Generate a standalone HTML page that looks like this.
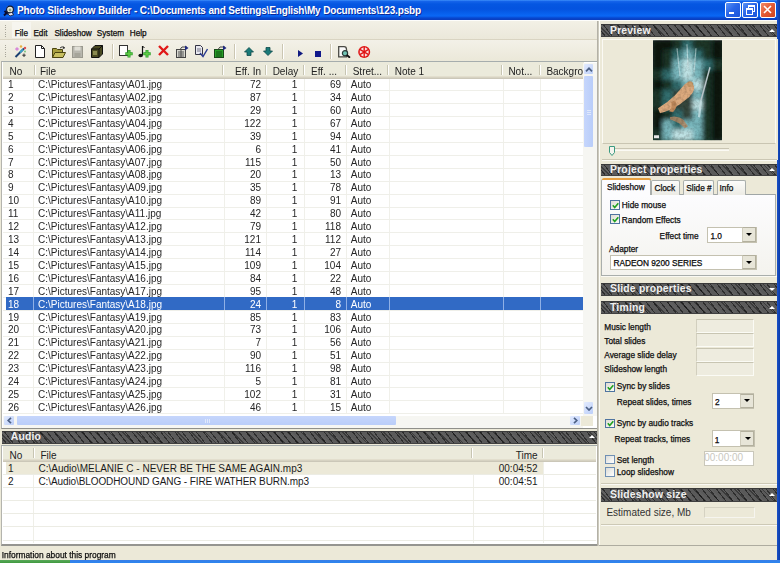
<!DOCTYPE html>
<html><head><meta charset="utf-8"><style>
html,body{margin:0;padding:0;}
body{width:780px;height:563px;overflow:hidden;position:relative;background:#ece9d8;font-family:"Liberation Sans", sans-serif;}
#w{position:absolute;left:0;top:0;width:780px;height:563px;overflow:hidden;filter:blur(0.35px);}
#w>div,#w>svg{position:absolute;}
.t{white-space:pre;}
.u{-webkit-text-stroke:0.25px #000;}
</style></head><body><div id="w">
<div style="left:0px;top:0px;width:780px;height:20px;background:linear-gradient(to bottom,#3d8ffa 0px,#1463ea 1.5px,#0557e2 4px,#0453df 9px,#0862ef 14px,#0a67f5 16px,#0747cf 18px,#0b3cbd 20px);"></div>
<div style="left:1.5px;top:2.5px;width:14px;height:14px;"><svg width="14" height="14" viewBox="0 0 14 14"><path d="M2 12.5 L6 8.5 M2.5 8 L6 11" stroke="#0a0a30" stroke-width="2"/><circle cx="8" cy="6.5" r="3.4" fill="#e6e6dc" stroke="#101830" stroke-width="1.1"/><circle cx="8" cy="7" r="1.4" fill="#8aa880"/><path d="M5.5 10.5 L9.5 9.5 L12 11.5 L8 13 Z" fill="#e8e4f0" stroke="#101830" stroke-width="0.8"/></svg></div>
<div class="t" style="left:17.00px;top:6.44px;font-size:10px;line-height:10px;color:#fff;font-weight:bold;letter-spacing:-0.15px;text-shadow:1px 1px 0 #0b2a9a;">Photo Slideshow Builder - C:\Documents and Settings\English\My Documents\123.psbp</div>
<div style="left:724.8px;top:1.6px;width:14px;height:14px;border:1px solid #fff;border-radius:2px;background:linear-gradient(135deg,#5a92f5 0%,#2a66e8 45%,#1c55da 100%);"></div>
<div style="left:742.4px;top:1.6px;width:14px;height:14px;border:1px solid #fff;border-radius:2px;background:linear-gradient(135deg,#5a92f5 0%,#2a66e8 45%,#1c55da 100%);"></div>
<div style="left:729px;top:11.5px;width:5px;height:2px;background:#fff;"></div>
<div style="left:748px;top:5px;width:5px;height:4px;border:1px solid #fff;border-top-width:2px;"></div>
<div style="left:746px;top:8px;width:5px;height:4px;border:1px solid #fff;border-top-width:2px;background:#2a66e8;"></div>
<div style="left:759.7px;top:1.6px;width:14px;height:14px;border:1px solid #fff;border-radius:2px;background:linear-gradient(135deg,#f08a68 0%,#e25a35 50%,#cf4420 100%);"></div>
<svg style="position:absolute;left:763px;top:5px" width="9" height="9" viewBox="0 0 9 9"><path d="M1 1 L8 8 M8 1 L1 8" stroke="#fff" stroke-width="1.6"/></svg>
<div style="left:776.7px;top:0px;width:3.3px;height:563px;background:linear-gradient(to right,#1a50c8,#0a3ca8);"></div>
<div style="left:775.6px;top:21px;width:1.1px;height:538px;background:#f8f8f2;"></div>
<div style="left:0px;top:20px;width:776.5px;height:1px;background:#fdfdfb;"></div>
<div style="left:0px;top:21px;width:597px;height:18px;background:linear-gradient(to bottom,#f2f0e6,#ebe8da);"></div>
<div style="left:0px;top:39px;width:597px;height:1px;background:#d9d4c2;"></div>
<div style="left:11.5px;top:22px;width:19px;height:16px;background:#f6f5ef;"></div>
<div style="left:5px;top:25.0px;width:1px;height:1px;background:#a8a69a;"></div>
<div style="left:5px;top:27.2px;width:1px;height:1px;background:#a8a69a;"></div>
<div style="left:5px;top:29.4px;width:1px;height:1px;background:#a8a69a;"></div>
<div style="left:5px;top:31.6px;width:1px;height:1px;background:#a8a69a;"></div>
<div style="left:5px;top:33.8px;width:1px;height:1px;background:#a8a69a;"></div>
<div style="left:5px;top:36.0px;width:1px;height:1px;background:#a8a69a;"></div>
<div class="t u" style="left:14.80px;top:29.66px;font-size:8.2px;line-height:8.2px;color:#1a1a1a;font-weight:normal;">File</div>
<div class="t u" style="left:33.40px;top:29.66px;font-size:8.2px;line-height:8.2px;color:#1a1a1a;font-weight:normal;">Edit</div>
<div class="t u" style="left:54.40px;top:29.66px;font-size:8.2px;line-height:8.2px;color:#1a1a1a;font-weight:normal;">Slideshow</div>
<div class="t u" style="left:96.80px;top:29.66px;font-size:8.2px;line-height:8.2px;color:#1a1a1a;font-weight:normal;">System</div>
<div class="t u" style="left:129.80px;top:29.66px;font-size:8.2px;line-height:8.2px;color:#1a1a1a;font-weight:normal;">Help</div>
<div style="left:0px;top:40px;width:597px;height:21px;background:linear-gradient(to bottom,#f3f1e8,#ebe8d9);"></div>
<div style="left:5px;top:45.0px;width:1px;height:1px;background:#a8a69a;"></div>
<div style="left:5px;top:47.2px;width:1px;height:1px;background:#a8a69a;"></div>
<div style="left:5px;top:49.4px;width:1px;height:1px;background:#a8a69a;"></div>
<div style="left:5px;top:51.6px;width:1px;height:1px;background:#a8a69a;"></div>
<div style="left:5px;top:53.8px;width:1px;height:1px;background:#a8a69a;"></div>
<div style="left:5px;top:56.0px;width:1px;height:1px;background:#a8a69a;"></div>
<div style="left:111.8px;top:44px;width:1px;height:15px;background:#cbc6b2;"></div>
<div style="left:112.8px;top:44px;width:1px;height:15px;background:#fff;"></div>
<div style="left:234px;top:44px;width:1px;height:15px;background:#cbc6b2;"></div>
<div style="left:235px;top:44px;width:1px;height:15px;background:#fff;"></div>
<div style="left:282.3px;top:44px;width:1px;height:15px;background:#cbc6b2;"></div>
<div style="left:283.3px;top:44px;width:1px;height:15px;background:#fff;"></div>
<div style="left:330.4px;top:44px;width:1px;height:15px;background:#cbc6b2;"></div>
<div style="left:331.4px;top:44px;width:1px;height:15px;background:#fff;"></div>
<svg style="position:absolute;left:14px;top:45px" width="13" height="13" viewBox="0 0 13 13"><path d="M1.5 12 L10 3.5" stroke="#1a3f70" stroke-width="2"/><path d="M6 7.5 L9 4.5" stroke="#39a0c8" stroke-width="2"/><rect x="1.5" y="2.5" width="3" height="3" fill="#d88ad8" transform="rotate(45 3 4)"/><circle cx="7" cy="1.5" r="1.2" fill="#e8b040"/><circle cx="11" cy="3" r="1.2" fill="#e05050"/><path d="M10 8.5 L10 12 M8.3 10.2 L11.7 10.2" stroke="#333" stroke-width="1"/><circle cx="11" cy="6.5" r="0.9" fill="#70c070"/></svg>
<svg style="position:absolute;left:35px;top:45px" width="10" height="13" viewBox="0 0 10 13"><path d="M0.5 0.5 H6.5 L9.5 3.5 V12.5 H0.5 Z" fill="#fff" stroke="#222" stroke-width="1"/><path d="M6.5 0.5 V3.5 H9.5" fill="none" stroke="#222" stroke-width="1"/></svg>
<svg style="position:absolute;left:52px;top:46px" width="14" height="12" viewBox="0 0 14 12"><path d="M0.5 2.5 H4.5 L5.5 3.5 H10.5 V11.5 H0.5 Z" fill="#a8a040" stroke="#4a4410" stroke-width="1"/><path d="M0.5 11.5 L3 6.5 H13.5 L11 11.5 Z" fill="#c8c060" stroke="#4a4410" stroke-width="1"/><path d="M8 2 Q10 -0.5 12.5 2 M12.5 2 L11.5 0.5 M12.5 2 L10.8 2.5" stroke="#333" fill="none" stroke-width="1"/></svg>
<svg style="position:absolute;left:72px;top:46px" width="11" height="12" viewBox="0 0 11 12"><rect x="0.5" y="0.5" width="10" height="11" fill="#b8b7ae" stroke="#9a998e"/><rect x="2.5" y="0.5" width="6" height="4" fill="#e0dfd6"/><rect x="2.5" y="7" width="6" height="4.5" fill="#a6a59a"/></svg>
<svg style="position:absolute;left:91px;top:45px" width="12" height="13" viewBox="0 0 12 13"><path d="M0.5 4 L4 0.5 H11.5 V9 L8 12.5 H0.5 Z" fill="#4a4a22" stroke="#111" stroke-width="1"/><path d="M0.5 4 H8 V12.5 M8 4 L11.5 0.5" stroke="#111" fill="none"/><rect x="2" y="6" width="4" height="4" fill="#8a8a50"/></svg>
<svg style="position:absolute;left:118.5px;top:44.5px" width="14" height="13" viewBox="0 0 14 13"><rect x="0.5" y="0.5" width="8" height="10" fill="#fff" stroke="#333"/><path d="M10 5 V12.5 M6.3 8.8 H13.7" stroke="#2aa02a" stroke-width="3"/><path d="M10 5.5 V12 M6.8 8.8 H13.2" stroke="#6ad04a" stroke-width="1.2"/></svg>
<svg style="position:absolute;left:138px;top:44.5px" width="13" height="13" viewBox="0 0 13 13"><path d="M4.5 1 V10" stroke="#111" stroke-width="1.2"/><path d="M4.5 1 L6.5 3" stroke="#111" stroke-width="1"/><ellipse cx="2.7" cy="10.5" rx="2.3" ry="1.8" fill="#111"/><path d="M9 5 V12.5 M5.3 8.8 H12.7" stroke="#2aa02a" stroke-width="3"/><path d="M9 5.5 V12 M5.8 8.8 H12.2" stroke="#6ad04a" stroke-width="1.2"/></svg>
<svg style="position:absolute;left:158px;top:45px" width="11" height="11" viewBox="0 0 11 11"><path d="M1 1 L10 10 M10 1 L1 10" stroke="#e01818" stroke-width="2.4"/></svg>
<svg style="position:absolute;left:175.5px;top:44.5px" width="13" height="13" viewBox="0 0 13 13"><rect x="0.5" y="4.5" width="9" height="8" fill="#d8d8d0" stroke="#444"/><path d="M2 7 H8 M2 9 H8 M2 11 H8 M5 5 V12" stroke="#555"/><path d="M4 4.5 L6 2 H11" stroke="#444" fill="none"/><path d="M9 0.5 L12.5 3 L9 5.5 Z" fill="#202a80"/></svg>
<svg style="position:absolute;left:195px;top:44.5px" width="13" height="13" viewBox="0 0 13 13"><path d="M0.5 0.5 H5.5 L7.5 2.5 V9.5 H0.5 Z" fill="#e8e8f0" stroke="#334" stroke-width="1"/><path d="M2 4 H6 M2 6 H6" stroke="#778"/><path d="M5 8 L8 11.5 L12.5 4" stroke="#2a3a90" stroke-width="1.4" fill="none"/></svg>
<svg style="position:absolute;left:213.5px;top:44.5px" width="13" height="13" viewBox="0 0 13 13"><rect x="0.5" y="4.5" width="9" height="8" fill="#28a028" stroke="#184818"/><path d="M2 7 H8 M2 9 H8 M2 11 H8" stroke="#105010"/><path d="M4 4.5 L6 2 H11" stroke="#444" fill="none"/><path d="M9 0.5 L12.5 3 L9 5.5 Z" fill="#202a80"/></svg>
<svg style="position:absolute;left:243.5px;top:47px" width="10" height="9" viewBox="0 0 10 9"><path d="M5 0.5 L9.5 5 H7 V8.5 H3 V5 H0.5 Z" fill="#1a7a78" stroke="#0e4a4a" stroke-width="0.8"/></svg>
<svg style="position:absolute;left:262.5px;top:47px" width="10" height="9" viewBox="0 0 10 9"><path d="M5 8.5 L9.5 4 H7 V0.5 H3 V4 H0.5 Z" fill="#1a7a78" stroke="#0e4a4a" stroke-width="0.8"/></svg>
<svg style="position:absolute;left:297.5px;top:50px" width="5" height="7" viewBox="0 0 5 7"><path d="M0 0 L5 3.5 L0 7 Z" fill="#101a80"/></svg>
<div style="left:314.6px;top:50.7px;width:6.7px;height:6.5px;background:#10188a;"></div>
<svg style="position:absolute;left:338px;top:45.5px" width="13" height="12" viewBox="0 0 13 12"><path d="M0.7 0.7 H6 Q8.5 0.7 8.5 3.5 V10.8 H0.7 Z" fill="#fafafa" stroke="#4a4a44" stroke-width="1.3"/><circle cx="7" cy="7.2" r="2.6" fill="#70c4b4" stroke="#2a3a38" stroke-width="1.2"/><path d="M8.8 9 L12 11.8" stroke="#111" stroke-width="1.8"/></svg>
<svg style="position:absolute;left:357.5px;top:45.8px" width="13" height="12" viewBox="0 0 13 12"><circle cx="6.2" cy="6" r="6" fill="#e01414"/><path d="M6.85 4.87 L6.94 1.36 L9.85 3.04 Z M7.50 6.00 L10.59 4.32 L10.59 7.68 Z M6.85 7.13 L9.85 8.96 L6.94 10.64 Z M5.55 7.13 L5.46 10.64 L2.55 8.96 Z M4.90 6.00 L1.81 7.68 L1.81 4.32 Z M5.55 4.87 L2.55 3.04 L5.46 1.36 Z" fill="#fbe0e0"/></svg>
<div style="left:1.4px;top:61px;width:597.4px;height:368.3px;background:#fff;box-sizing:border-box;border-left:1.1px solid #b4b4ae;border-top:1.6px solid #a6adad;border-right:2.5px solid #a3a39c;border-bottom:1.4px solid #8f8f8a;"></div>
<div style="left:2.5px;top:62.6px;width:594px;height:1px;background:#fbfbf8;"></div>
<div style="left:2.5px;top:62px;width:581px;height:16px;background:#ebeadb;"></div>
<div style="left:2.5px;top:75.5px;width:581px;height:1px;background:#e2decd;"></div>
<div style="left:2.5px;top:76.5px;width:581px;height:1px;background:#d6d2c2;"></div>
<div style="left:2.5px;top:77.5px;width:581px;height:1px;background:#cbc7b8;"></div>
<div style="left:34px;top:65px;width:1px;height:10px;background:#c7c5b2;"></div>
<div style="left:35px;top:65px;width:1px;height:10px;background:#fff;"></div>
<div style="left:222px;top:65px;width:1px;height:10px;background:#c7c5b2;"></div>
<div style="left:223px;top:65px;width:1px;height:10px;background:#fff;"></div>
<div style="left:264.8px;top:65px;width:1px;height:10px;background:#c7c5b2;"></div>
<div style="left:265.8px;top:65px;width:1px;height:10px;background:#fff;"></div>
<div style="left:302.6px;top:65px;width:1px;height:10px;background:#c7c5b2;"></div>
<div style="left:303.6px;top:65px;width:1px;height:10px;background:#fff;"></div>
<div style="left:345px;top:65px;width:1px;height:10px;background:#c7c5b2;"></div>
<div style="left:346px;top:65px;width:1px;height:10px;background:#fff;"></div>
<div style="left:387px;top:65px;width:1px;height:10px;background:#c7c5b2;"></div>
<div style="left:388px;top:65px;width:1px;height:10px;background:#fff;"></div>
<div style="left:501.3px;top:65px;width:1px;height:10px;background:#c7c5b2;"></div>
<div style="left:502.3px;top:65px;width:1px;height:10px;background:#fff;"></div>
<div style="left:538.8px;top:65px;width:1px;height:10px;background:#c7c5b2;"></div>
<div style="left:539.8px;top:65px;width:1px;height:10px;background:#fff;"></div>
<div class="t" style="left:9.60px;top:66.53px;font-size:10px;line-height:10px;color:#222;font-weight:normal;">No</div>
<div class="t" style="left:40.00px;top:66.53px;font-size:10px;line-height:10px;color:#222;font-weight:normal;">File</div>
<div class="t" style="left:-39.00px;width:300px;text-align:right;top:66.53px;font-size:10px;line-height:10px;color:#222;font-weight:normal;">Eff. In</div>
<div class="t" style="left:-1.80px;width:300px;text-align:right;top:66.53px;font-size:10px;line-height:10px;color:#222;font-weight:normal;">Delay</div>
<div class="t" style="left:37.00px;width:300px;text-align:right;top:66.53px;font-size:10px;line-height:10px;color:#222;font-weight:normal;">Eff. ...</div>
<div class="t" style="left:352.70px;top:66.53px;font-size:10px;line-height:10px;color:#222;font-weight:normal;">Stret...</div>
<div class="t" style="left:394.70px;top:66.53px;font-size:10px;line-height:10px;color:#222;font-weight:normal;">Note 1</div>
<div class="t" style="left:508.40px;top:66.53px;font-size:10px;line-height:10px;color:#222;font-weight:normal;">Not...</div>
<div class="t" style="left:546.40px;top:66.53px;font-size:10px;line-height:10px;color:#222;font-weight:normal;">Backgro</div>
<div style="left:33px;top:78.5px;width:1px;height:335.5px;background:#f0f0ea;"></div>
<div style="left:223.5px;top:78.5px;width:1px;height:335.5px;background:#f0f0ea;"></div>
<div style="left:266px;top:78.5px;width:1px;height:335.5px;background:#f0f0ea;"></div>
<div style="left:304px;top:78.5px;width:1px;height:335.5px;background:#f0f0ea;"></div>
<div style="left:346px;top:78.5px;width:1px;height:335.5px;background:#f0f0ea;"></div>
<div style="left:388.5px;top:78.5px;width:1px;height:335.5px;background:#f0f0ea;"></div>
<div style="left:502.7px;top:78.5px;width:1px;height:335.5px;background:#f0f0ea;"></div>
<div style="left:540px;top:78.5px;width:1px;height:335.5px;background:#f0f0ea;"></div>
<div style="left:2.5px;top:90.25999999999999px;width:581px;height:0.8px;background:#efefe9;"></div>
<div style="left:2.5px;top:103.17999999999999px;width:581px;height:0.8px;background:#efefe9;"></div>
<div style="left:2.5px;top:116.1px;width:581px;height:0.8px;background:#efefe9;"></div>
<div style="left:2.5px;top:129.01999999999998px;width:581px;height:0.8px;background:#efefe9;"></div>
<div style="left:2.5px;top:141.94px;width:581px;height:0.8px;background:#efefe9;"></div>
<div style="left:2.5px;top:154.85999999999999px;width:581px;height:0.8px;background:#efefe9;"></div>
<div style="left:2.5px;top:167.78px;width:581px;height:0.8px;background:#efefe9;"></div>
<div style="left:2.5px;top:180.7px;width:581px;height:0.8px;background:#efefe9;"></div>
<div style="left:2.5px;top:193.61999999999998px;width:581px;height:0.8px;background:#efefe9;"></div>
<div style="left:2.5px;top:206.54px;width:581px;height:0.8px;background:#efefe9;"></div>
<div style="left:2.5px;top:219.45999999999998px;width:581px;height:0.8px;background:#efefe9;"></div>
<div style="left:2.5px;top:232.38px;width:581px;height:0.8px;background:#efefe9;"></div>
<div style="left:2.5px;top:245.29999999999998px;width:581px;height:0.8px;background:#efefe9;"></div>
<div style="left:2.5px;top:258.22px;width:581px;height:0.8px;background:#efefe9;"></div>
<div style="left:2.5px;top:271.14px;width:581px;height:0.8px;background:#efefe9;"></div>
<div style="left:2.5px;top:284.06000000000006px;width:581px;height:0.8px;background:#efefe9;"></div>
<div style="left:2.5px;top:296.98px;width:581px;height:0.8px;background:#efefe9;"></div>
<div style="left:2.5px;top:309.9px;width:581px;height:0.8px;background:#efefe9;"></div>
<div style="left:2.5px;top:322.82000000000005px;width:581px;height:0.8px;background:#efefe9;"></div>
<div style="left:2.5px;top:335.74px;width:581px;height:0.8px;background:#efefe9;"></div>
<div style="left:2.5px;top:348.65999999999997px;width:581px;height:0.8px;background:#efefe9;"></div>
<div style="left:2.5px;top:361.58000000000004px;width:581px;height:0.8px;background:#efefe9;"></div>
<div style="left:2.5px;top:374.5px;width:581px;height:0.8px;background:#efefe9;"></div>
<div style="left:2.5px;top:387.4200000000001px;width:581px;height:0.8px;background:#efefe9;"></div>
<div style="left:2.5px;top:400.34000000000003px;width:581px;height:0.8px;background:#efefe9;"></div>
<div style="left:2.5px;top:413.26px;width:581px;height:0.8px;background:#efefe9;"></div>
<div class="t" style="left:8.00px;top:79.98px;font-size:10px;line-height:10px;color:#262626;font-weight:normal;">1</div>
<div class="t" style="left:38.10px;top:79.98px;font-size:10px;line-height:10px;color:#262626;font-weight:normal;">C:\Pictures\Fantasy\A01.jpg</div>
<div class="t" style="left:-39.00px;width:300px;text-align:right;top:79.98px;font-size:10px;line-height:10px;color:#262626;font-weight:normal;">72</div>
<div class="t" style="left:-2.60px;width:300px;text-align:right;top:79.98px;font-size:10px;line-height:10px;color:#262626;font-weight:normal;">1</div>
<div class="t" style="left:41.00px;width:300px;text-align:right;top:79.98px;font-size:10px;line-height:10px;color:#262626;font-weight:normal;">69</div>
<div class="t" style="left:350.80px;top:79.98px;font-size:10px;line-height:10px;color:#262626;font-weight:normal;">Auto</div>
<div class="t" style="left:8.00px;top:92.91px;font-size:10px;line-height:10px;color:#262626;font-weight:normal;">2</div>
<div class="t" style="left:38.10px;top:92.91px;font-size:10px;line-height:10px;color:#262626;font-weight:normal;">C:\Pictures\Fantasy\A02.jpg</div>
<div class="t" style="left:-39.00px;width:300px;text-align:right;top:92.91px;font-size:10px;line-height:10px;color:#262626;font-weight:normal;">87</div>
<div class="t" style="left:-2.60px;width:300px;text-align:right;top:92.91px;font-size:10px;line-height:10px;color:#262626;font-weight:normal;">1</div>
<div class="t" style="left:41.00px;width:300px;text-align:right;top:92.91px;font-size:10px;line-height:10px;color:#262626;font-weight:normal;">34</div>
<div class="t" style="left:350.80px;top:92.91px;font-size:10px;line-height:10px;color:#262626;font-weight:normal;">Auto</div>
<div class="t" style="left:8.00px;top:105.83px;font-size:10px;line-height:10px;color:#262626;font-weight:normal;">3</div>
<div class="t" style="left:38.10px;top:105.83px;font-size:10px;line-height:10px;color:#262626;font-weight:normal;">C:\Pictures\Fantasy\A03.jpg</div>
<div class="t" style="left:-39.00px;width:300px;text-align:right;top:105.83px;font-size:10px;line-height:10px;color:#262626;font-weight:normal;">29</div>
<div class="t" style="left:-2.60px;width:300px;text-align:right;top:105.83px;font-size:10px;line-height:10px;color:#262626;font-weight:normal;">1</div>
<div class="t" style="left:41.00px;width:300px;text-align:right;top:105.83px;font-size:10px;line-height:10px;color:#262626;font-weight:normal;">60</div>
<div class="t" style="left:350.80px;top:105.83px;font-size:10px;line-height:10px;color:#262626;font-weight:normal;">Auto</div>
<div class="t" style="left:8.00px;top:118.75px;font-size:10px;line-height:10px;color:#262626;font-weight:normal;">4</div>
<div class="t" style="left:38.10px;top:118.75px;font-size:10px;line-height:10px;color:#262626;font-weight:normal;">C:\Pictures\Fantasy\A04.jpg</div>
<div class="t" style="left:-39.00px;width:300px;text-align:right;top:118.75px;font-size:10px;line-height:10px;color:#262626;font-weight:normal;">122</div>
<div class="t" style="left:-2.60px;width:300px;text-align:right;top:118.75px;font-size:10px;line-height:10px;color:#262626;font-weight:normal;">1</div>
<div class="t" style="left:41.00px;width:300px;text-align:right;top:118.75px;font-size:10px;line-height:10px;color:#262626;font-weight:normal;">67</div>
<div class="t" style="left:350.80px;top:118.75px;font-size:10px;line-height:10px;color:#262626;font-weight:normal;">Auto</div>
<div class="t" style="left:8.00px;top:131.66px;font-size:10px;line-height:10px;color:#262626;font-weight:normal;">5</div>
<div class="t" style="left:38.10px;top:131.66px;font-size:10px;line-height:10px;color:#262626;font-weight:normal;">C:\Pictures\Fantasy\A05.jpg</div>
<div class="t" style="left:-39.00px;width:300px;text-align:right;top:131.66px;font-size:10px;line-height:10px;color:#262626;font-weight:normal;">39</div>
<div class="t" style="left:-2.60px;width:300px;text-align:right;top:131.66px;font-size:10px;line-height:10px;color:#262626;font-weight:normal;">1</div>
<div class="t" style="left:41.00px;width:300px;text-align:right;top:131.66px;font-size:10px;line-height:10px;color:#262626;font-weight:normal;">94</div>
<div class="t" style="left:350.80px;top:131.66px;font-size:10px;line-height:10px;color:#262626;font-weight:normal;">Auto</div>
<div class="t" style="left:8.00px;top:144.59px;font-size:10px;line-height:10px;color:#262626;font-weight:normal;">6</div>
<div class="t" style="left:38.10px;top:144.59px;font-size:10px;line-height:10px;color:#262626;font-weight:normal;">C:\Pictures\Fantasy\A06.jpg</div>
<div class="t" style="left:-39.00px;width:300px;text-align:right;top:144.59px;font-size:10px;line-height:10px;color:#262626;font-weight:normal;">6</div>
<div class="t" style="left:-2.60px;width:300px;text-align:right;top:144.59px;font-size:10px;line-height:10px;color:#262626;font-weight:normal;">1</div>
<div class="t" style="left:41.00px;width:300px;text-align:right;top:144.59px;font-size:10px;line-height:10px;color:#262626;font-weight:normal;">41</div>
<div class="t" style="left:350.80px;top:144.59px;font-size:10px;line-height:10px;color:#262626;font-weight:normal;">Auto</div>
<div class="t" style="left:8.00px;top:157.50px;font-size:10px;line-height:10px;color:#262626;font-weight:normal;">7</div>
<div class="t" style="left:38.10px;top:157.50px;font-size:10px;line-height:10px;color:#262626;font-weight:normal;">C:\Pictures\Fantasy\A07.jpg</div>
<div class="t" style="left:-39.00px;width:300px;text-align:right;top:157.50px;font-size:10px;line-height:10px;color:#262626;font-weight:normal;">115</div>
<div class="t" style="left:-2.60px;width:300px;text-align:right;top:157.50px;font-size:10px;line-height:10px;color:#262626;font-weight:normal;">1</div>
<div class="t" style="left:41.00px;width:300px;text-align:right;top:157.50px;font-size:10px;line-height:10px;color:#262626;font-weight:normal;">50</div>
<div class="t" style="left:350.80px;top:157.50px;font-size:10px;line-height:10px;color:#262626;font-weight:normal;">Auto</div>
<div class="t" style="left:8.00px;top:170.42px;font-size:10px;line-height:10px;color:#262626;font-weight:normal;">8</div>
<div class="t" style="left:38.10px;top:170.42px;font-size:10px;line-height:10px;color:#262626;font-weight:normal;">C:\Pictures\Fantasy\A08.jpg</div>
<div class="t" style="left:-39.00px;width:300px;text-align:right;top:170.42px;font-size:10px;line-height:10px;color:#262626;font-weight:normal;">20</div>
<div class="t" style="left:-2.60px;width:300px;text-align:right;top:170.42px;font-size:10px;line-height:10px;color:#262626;font-weight:normal;">1</div>
<div class="t" style="left:41.00px;width:300px;text-align:right;top:170.42px;font-size:10px;line-height:10px;color:#262626;font-weight:normal;">13</div>
<div class="t" style="left:350.80px;top:170.42px;font-size:10px;line-height:10px;color:#262626;font-weight:normal;">Auto</div>
<div class="t" style="left:8.00px;top:183.34px;font-size:10px;line-height:10px;color:#262626;font-weight:normal;">9</div>
<div class="t" style="left:38.10px;top:183.34px;font-size:10px;line-height:10px;color:#262626;font-weight:normal;">C:\Pictures\Fantasy\A09.jpg</div>
<div class="t" style="left:-39.00px;width:300px;text-align:right;top:183.34px;font-size:10px;line-height:10px;color:#262626;font-weight:normal;">35</div>
<div class="t" style="left:-2.60px;width:300px;text-align:right;top:183.34px;font-size:10px;line-height:10px;color:#262626;font-weight:normal;">1</div>
<div class="t" style="left:41.00px;width:300px;text-align:right;top:183.34px;font-size:10px;line-height:10px;color:#262626;font-weight:normal;">78</div>
<div class="t" style="left:350.80px;top:183.34px;font-size:10px;line-height:10px;color:#262626;font-weight:normal;">Auto</div>
<div class="t" style="left:8.00px;top:196.27px;font-size:10px;line-height:10px;color:#262626;font-weight:normal;">10</div>
<div class="t" style="left:38.10px;top:196.27px;font-size:10px;line-height:10px;color:#262626;font-weight:normal;">C:\Pictures\Fantasy\A10.jpg</div>
<div class="t" style="left:-39.00px;width:300px;text-align:right;top:196.27px;font-size:10px;line-height:10px;color:#262626;font-weight:normal;">89</div>
<div class="t" style="left:-2.60px;width:300px;text-align:right;top:196.27px;font-size:10px;line-height:10px;color:#262626;font-weight:normal;">1</div>
<div class="t" style="left:41.00px;width:300px;text-align:right;top:196.27px;font-size:10px;line-height:10px;color:#262626;font-weight:normal;">91</div>
<div class="t" style="left:350.80px;top:196.27px;font-size:10px;line-height:10px;color:#262626;font-weight:normal;">Auto</div>
<div class="t" style="left:8.00px;top:209.18px;font-size:10px;line-height:10px;color:#262626;font-weight:normal;">11</div>
<div class="t" style="left:38.10px;top:209.18px;font-size:10px;line-height:10px;color:#262626;font-weight:normal;">C:\Pictures\Fantasy\A11.jpg</div>
<div class="t" style="left:-39.00px;width:300px;text-align:right;top:209.18px;font-size:10px;line-height:10px;color:#262626;font-weight:normal;">42</div>
<div class="t" style="left:-2.60px;width:300px;text-align:right;top:209.18px;font-size:10px;line-height:10px;color:#262626;font-weight:normal;">1</div>
<div class="t" style="left:41.00px;width:300px;text-align:right;top:209.18px;font-size:10px;line-height:10px;color:#262626;font-weight:normal;">80</div>
<div class="t" style="left:350.80px;top:209.18px;font-size:10px;line-height:10px;color:#262626;font-weight:normal;">Auto</div>
<div class="t" style="left:8.00px;top:222.10px;font-size:10px;line-height:10px;color:#262626;font-weight:normal;">12</div>
<div class="t" style="left:38.10px;top:222.10px;font-size:10px;line-height:10px;color:#262626;font-weight:normal;">C:\Pictures\Fantasy\A12.jpg</div>
<div class="t" style="left:-39.00px;width:300px;text-align:right;top:222.10px;font-size:10px;line-height:10px;color:#262626;font-weight:normal;">79</div>
<div class="t" style="left:-2.60px;width:300px;text-align:right;top:222.10px;font-size:10px;line-height:10px;color:#262626;font-weight:normal;">1</div>
<div class="t" style="left:41.00px;width:300px;text-align:right;top:222.10px;font-size:10px;line-height:10px;color:#262626;font-weight:normal;">118</div>
<div class="t" style="left:350.80px;top:222.10px;font-size:10px;line-height:10px;color:#262626;font-weight:normal;">Auto</div>
<div class="t" style="left:8.00px;top:235.03px;font-size:10px;line-height:10px;color:#262626;font-weight:normal;">13</div>
<div class="t" style="left:38.10px;top:235.03px;font-size:10px;line-height:10px;color:#262626;font-weight:normal;">C:\Pictures\Fantasy\A13.jpg</div>
<div class="t" style="left:-39.00px;width:300px;text-align:right;top:235.03px;font-size:10px;line-height:10px;color:#262626;font-weight:normal;">121</div>
<div class="t" style="left:-2.60px;width:300px;text-align:right;top:235.03px;font-size:10px;line-height:10px;color:#262626;font-weight:normal;">1</div>
<div class="t" style="left:41.00px;width:300px;text-align:right;top:235.03px;font-size:10px;line-height:10px;color:#262626;font-weight:normal;">112</div>
<div class="t" style="left:350.80px;top:235.03px;font-size:10px;line-height:10px;color:#262626;font-weight:normal;">Auto</div>
<div class="t" style="left:8.00px;top:247.95px;font-size:10px;line-height:10px;color:#262626;font-weight:normal;">14</div>
<div class="t" style="left:38.10px;top:247.95px;font-size:10px;line-height:10px;color:#262626;font-weight:normal;">C:\Pictures\Fantasy\A14.jpg</div>
<div class="t" style="left:-39.00px;width:300px;text-align:right;top:247.95px;font-size:10px;line-height:10px;color:#262626;font-weight:normal;">114</div>
<div class="t" style="left:-2.60px;width:300px;text-align:right;top:247.95px;font-size:10px;line-height:10px;color:#262626;font-weight:normal;">1</div>
<div class="t" style="left:41.00px;width:300px;text-align:right;top:247.95px;font-size:10px;line-height:10px;color:#262626;font-weight:normal;">27</div>
<div class="t" style="left:350.80px;top:247.95px;font-size:10px;line-height:10px;color:#262626;font-weight:normal;">Auto</div>
<div class="t" style="left:8.00px;top:260.87px;font-size:10px;line-height:10px;color:#262626;font-weight:normal;">15</div>
<div class="t" style="left:38.10px;top:260.87px;font-size:10px;line-height:10px;color:#262626;font-weight:normal;">C:\Pictures\Fantasy\A15.jpg</div>
<div class="t" style="left:-39.00px;width:300px;text-align:right;top:260.87px;font-size:10px;line-height:10px;color:#262626;font-weight:normal;">109</div>
<div class="t" style="left:-2.60px;width:300px;text-align:right;top:260.87px;font-size:10px;line-height:10px;color:#262626;font-weight:normal;">1</div>
<div class="t" style="left:41.00px;width:300px;text-align:right;top:260.87px;font-size:10px;line-height:10px;color:#262626;font-weight:normal;">104</div>
<div class="t" style="left:350.80px;top:260.87px;font-size:10px;line-height:10px;color:#262626;font-weight:normal;">Auto</div>
<div class="t" style="left:8.00px;top:273.79px;font-size:10px;line-height:10px;color:#262626;font-weight:normal;">16</div>
<div class="t" style="left:38.10px;top:273.79px;font-size:10px;line-height:10px;color:#262626;font-weight:normal;">C:\Pictures\Fantasy\A16.jpg</div>
<div class="t" style="left:-39.00px;width:300px;text-align:right;top:273.79px;font-size:10px;line-height:10px;color:#262626;font-weight:normal;">84</div>
<div class="t" style="left:-2.60px;width:300px;text-align:right;top:273.79px;font-size:10px;line-height:10px;color:#262626;font-weight:normal;">1</div>
<div class="t" style="left:41.00px;width:300px;text-align:right;top:273.79px;font-size:10px;line-height:10px;color:#262626;font-weight:normal;">22</div>
<div class="t" style="left:350.80px;top:273.79px;font-size:10px;line-height:10px;color:#262626;font-weight:normal;">Auto</div>
<div class="t" style="left:8.00px;top:286.71px;font-size:10px;line-height:10px;color:#262626;font-weight:normal;">17</div>
<div class="t" style="left:38.10px;top:286.71px;font-size:10px;line-height:10px;color:#262626;font-weight:normal;">C:\Pictures\Fantasy\A17.jpg</div>
<div class="t" style="left:-39.00px;width:300px;text-align:right;top:286.71px;font-size:10px;line-height:10px;color:#262626;font-weight:normal;">95</div>
<div class="t" style="left:-2.60px;width:300px;text-align:right;top:286.71px;font-size:10px;line-height:10px;color:#262626;font-weight:normal;">1</div>
<div class="t" style="left:41.00px;width:300px;text-align:right;top:286.71px;font-size:10px;line-height:10px;color:#262626;font-weight:normal;">48</div>
<div class="t" style="left:350.80px;top:286.71px;font-size:10px;line-height:10px;color:#262626;font-weight:normal;">Auto</div>
<div style="left:6.2px;top:297.30px;width:577px;height:12.3px;background:#316ac5;"></div>
<div style="left:33px;top:297.29999999999995px;width:1px;height:12.3px;background:#8fb0e6;"></div>
<div style="left:223.5px;top:297.29999999999995px;width:1px;height:12.3px;background:#8fb0e6;"></div>
<div style="left:266px;top:297.29999999999995px;width:1px;height:12.3px;background:#8fb0e6;"></div>
<div style="left:304px;top:297.29999999999995px;width:1px;height:12.3px;background:#8fb0e6;"></div>
<div style="left:346px;top:297.29999999999995px;width:1px;height:12.3px;background:#8fb0e6;"></div>
<div style="left:388.5px;top:297.29999999999995px;width:1px;height:12.3px;background:#8fb0e6;"></div>
<div style="left:502.7px;top:297.29999999999995px;width:1px;height:12.3px;background:#8fb0e6;"></div>
<div style="left:540px;top:297.29999999999995px;width:1px;height:12.3px;background:#8fb0e6;"></div>
<div class="t" style="left:8.00px;top:299.62px;font-size:10px;line-height:10px;color:#fff;font-weight:normal;">18</div>
<div class="t" style="left:38.10px;top:299.62px;font-size:10px;line-height:10px;color:#fff;font-weight:normal;">C:\Pictures\Fantasy\A18.jpg</div>
<div class="t" style="left:-39.00px;width:300px;text-align:right;top:299.62px;font-size:10px;line-height:10px;color:#fff;font-weight:normal;">24</div>
<div class="t" style="left:-2.60px;width:300px;text-align:right;top:299.62px;font-size:10px;line-height:10px;color:#fff;font-weight:normal;">1</div>
<div class="t" style="left:41.00px;width:300px;text-align:right;top:299.62px;font-size:10px;line-height:10px;color:#fff;font-weight:normal;">8</div>
<div class="t" style="left:350.80px;top:299.62px;font-size:10px;line-height:10px;color:#fff;font-weight:normal;">Auto</div>
<div class="t" style="left:8.00px;top:312.55px;font-size:10px;line-height:10px;color:#262626;font-weight:normal;">19</div>
<div class="t" style="left:38.10px;top:312.55px;font-size:10px;line-height:10px;color:#262626;font-weight:normal;">C:\Pictures\Fantasy\A19.jpg</div>
<div class="t" style="left:-39.00px;width:300px;text-align:right;top:312.55px;font-size:10px;line-height:10px;color:#262626;font-weight:normal;">85</div>
<div class="t" style="left:-2.60px;width:300px;text-align:right;top:312.55px;font-size:10px;line-height:10px;color:#262626;font-weight:normal;">1</div>
<div class="t" style="left:41.00px;width:300px;text-align:right;top:312.55px;font-size:10px;line-height:10px;color:#262626;font-weight:normal;">83</div>
<div class="t" style="left:350.80px;top:312.55px;font-size:10px;line-height:10px;color:#262626;font-weight:normal;">Auto</div>
<div class="t" style="left:8.00px;top:325.47px;font-size:10px;line-height:10px;color:#262626;font-weight:normal;">20</div>
<div class="t" style="left:38.10px;top:325.47px;font-size:10px;line-height:10px;color:#262626;font-weight:normal;">C:\Pictures\Fantasy\A20.jpg</div>
<div class="t" style="left:-39.00px;width:300px;text-align:right;top:325.47px;font-size:10px;line-height:10px;color:#262626;font-weight:normal;">73</div>
<div class="t" style="left:-2.60px;width:300px;text-align:right;top:325.47px;font-size:10px;line-height:10px;color:#262626;font-weight:normal;">1</div>
<div class="t" style="left:41.00px;width:300px;text-align:right;top:325.47px;font-size:10px;line-height:10px;color:#262626;font-weight:normal;">106</div>
<div class="t" style="left:350.80px;top:325.47px;font-size:10px;line-height:10px;color:#262626;font-weight:normal;">Auto</div>
<div class="t" style="left:8.00px;top:338.38px;font-size:10px;line-height:10px;color:#262626;font-weight:normal;">21</div>
<div class="t" style="left:38.10px;top:338.38px;font-size:10px;line-height:10px;color:#262626;font-weight:normal;">C:\Pictures\Fantasy\A21.jpg</div>
<div class="t" style="left:-39.00px;width:300px;text-align:right;top:338.38px;font-size:10px;line-height:10px;color:#262626;font-weight:normal;">7</div>
<div class="t" style="left:-2.60px;width:300px;text-align:right;top:338.38px;font-size:10px;line-height:10px;color:#262626;font-weight:normal;">1</div>
<div class="t" style="left:41.00px;width:300px;text-align:right;top:338.38px;font-size:10px;line-height:10px;color:#262626;font-weight:normal;">56</div>
<div class="t" style="left:350.80px;top:338.38px;font-size:10px;line-height:10px;color:#262626;font-weight:normal;">Auto</div>
<div class="t" style="left:8.00px;top:351.31px;font-size:10px;line-height:10px;color:#262626;font-weight:normal;">22</div>
<div class="t" style="left:38.10px;top:351.31px;font-size:10px;line-height:10px;color:#262626;font-weight:normal;">C:\Pictures\Fantasy\A22.jpg</div>
<div class="t" style="left:-39.00px;width:300px;text-align:right;top:351.31px;font-size:10px;line-height:10px;color:#262626;font-weight:normal;">90</div>
<div class="t" style="left:-2.60px;width:300px;text-align:right;top:351.31px;font-size:10px;line-height:10px;color:#262626;font-weight:normal;">1</div>
<div class="t" style="left:41.00px;width:300px;text-align:right;top:351.31px;font-size:10px;line-height:10px;color:#262626;font-weight:normal;">51</div>
<div class="t" style="left:350.80px;top:351.31px;font-size:10px;line-height:10px;color:#262626;font-weight:normal;">Auto</div>
<div class="t" style="left:8.00px;top:364.23px;font-size:10px;line-height:10px;color:#262626;font-weight:normal;">23</div>
<div class="t" style="left:38.10px;top:364.23px;font-size:10px;line-height:10px;color:#262626;font-weight:normal;">C:\Pictures\Fantasy\A23.jpg</div>
<div class="t" style="left:-39.00px;width:300px;text-align:right;top:364.23px;font-size:10px;line-height:10px;color:#262626;font-weight:normal;">116</div>
<div class="t" style="left:-2.60px;width:300px;text-align:right;top:364.23px;font-size:10px;line-height:10px;color:#262626;font-weight:normal;">1</div>
<div class="t" style="left:41.00px;width:300px;text-align:right;top:364.23px;font-size:10px;line-height:10px;color:#262626;font-weight:normal;">98</div>
<div class="t" style="left:350.80px;top:364.23px;font-size:10px;line-height:10px;color:#262626;font-weight:normal;">Auto</div>
<div class="t" style="left:8.00px;top:377.15px;font-size:10px;line-height:10px;color:#262626;font-weight:normal;">24</div>
<div class="t" style="left:38.10px;top:377.15px;font-size:10px;line-height:10px;color:#262626;font-weight:normal;">C:\Pictures\Fantasy\A24.jpg</div>
<div class="t" style="left:-39.00px;width:300px;text-align:right;top:377.15px;font-size:10px;line-height:10px;color:#262626;font-weight:normal;">5</div>
<div class="t" style="left:-2.60px;width:300px;text-align:right;top:377.15px;font-size:10px;line-height:10px;color:#262626;font-weight:normal;">1</div>
<div class="t" style="left:41.00px;width:300px;text-align:right;top:377.15px;font-size:10px;line-height:10px;color:#262626;font-weight:normal;">81</div>
<div class="t" style="left:350.80px;top:377.15px;font-size:10px;line-height:10px;color:#262626;font-weight:normal;">Auto</div>
<div class="t" style="left:8.00px;top:390.06px;font-size:10px;line-height:10px;color:#262626;font-weight:normal;">25</div>
<div class="t" style="left:38.10px;top:390.06px;font-size:10px;line-height:10px;color:#262626;font-weight:normal;">C:\Pictures\Fantasy\A25.jpg</div>
<div class="t" style="left:-39.00px;width:300px;text-align:right;top:390.06px;font-size:10px;line-height:10px;color:#262626;font-weight:normal;">102</div>
<div class="t" style="left:-2.60px;width:300px;text-align:right;top:390.06px;font-size:10px;line-height:10px;color:#262626;font-weight:normal;">1</div>
<div class="t" style="left:41.00px;width:300px;text-align:right;top:390.06px;font-size:10px;line-height:10px;color:#262626;font-weight:normal;">31</div>
<div class="t" style="left:350.80px;top:390.06px;font-size:10px;line-height:10px;color:#262626;font-weight:normal;">Auto</div>
<div class="t" style="left:8.00px;top:402.99px;font-size:10px;line-height:10px;color:#262626;font-weight:normal;">26</div>
<div class="t" style="left:38.10px;top:402.99px;font-size:10px;line-height:10px;color:#262626;font-weight:normal;">C:\Pictures\Fantasy\A26.jpg</div>
<div class="t" style="left:-39.00px;width:300px;text-align:right;top:402.99px;font-size:10px;line-height:10px;color:#262626;font-weight:normal;">46</div>
<div class="t" style="left:-2.60px;width:300px;text-align:right;top:402.99px;font-size:10px;line-height:10px;color:#262626;font-weight:normal;">1</div>
<div class="t" style="left:41.00px;width:300px;text-align:right;top:402.99px;font-size:10px;line-height:10px;color:#262626;font-weight:normal;">15</div>
<div class="t" style="left:350.80px;top:402.99px;font-size:10px;line-height:10px;color:#262626;font-weight:normal;">Auto</div>
<div style="left:583px;top:62.5px;width:13.5px;height:353.5px;background:#f6f6f2;"></div>
<div style="left:584px;top:64px;width:9.2px;height:10px;background:linear-gradient(135deg,#e3ebfe,#bccff9);border-radius:1px;"></div>
<svg style="position:absolute;left:584.6px;top:66.5px" width="8" height="5" viewBox="0 0 8 5"><path d="M1 4.3 L4 1.3 L7 4.3" stroke="#4d6185" stroke-width="1.7" fill="none"/></svg>
<div style="left:584px;top:75.6px;width:9.2px;height:71.5px;background:linear-gradient(to right,#c6d6fc,#b9cdf9);border-radius:1px;"></div>
<div style="left:586.5px;top:109.5px;width:4.5px;height:0.8px;background:#dfe8fc;"></div>
<div style="left:586.5px;top:111.5px;width:4.5px;height:0.8px;background:#dfe8fc;"></div>
<div style="left:586.5px;top:113.5px;width:4.5px;height:0.8px;background:#dfe8fc;"></div>
<div style="left:584px;top:402.3px;width:9.2px;height:11.7px;background:linear-gradient(135deg,#e3ebfe,#bccff9);border-radius:1px;"></div>
<svg style="position:absolute;left:584.6px;top:405.5px" width="8" height="5" viewBox="0 0 8 5"><path d="M1 1 L4 4 L7 1" stroke="#4d6185" stroke-width="1.7" fill="none"/></svg>
<div style="left:2.5px;top:415.8px;width:580.5px;height:12.2px;background:#f6f6f2;"></div>
<div style="left:4.3px;top:416.2px;width:9.6px;height:8.8px;background:linear-gradient(135deg,#e3ebfe,#bccff9);border-radius:1px;"></div>
<svg style="position:absolute;left:6.5px;top:417.2px" width="5" height="7" viewBox="0 0 5 7"><path d="M4 0.8 L1.2 3.5 L4 6.2" stroke="#4d6185" stroke-width="1.7" fill="none"/></svg>
<div style="left:17.4px;top:416.2px;width:378.6px;height:8.8px;background:linear-gradient(to bottom,#c6d6fc,#b9cdf9);border-radius:1px;"></div>
<div style="left:205px;top:418.5px;width:0.8px;height:4.5px;background:#dfe8fc;"></div>
<div style="left:207px;top:418.5px;width:0.8px;height:4.5px;background:#dfe8fc;"></div>
<div style="left:209px;top:418.5px;width:0.8px;height:4.5px;background:#dfe8fc;"></div>
<div style="left:570.3px;top:416px;width:10px;height:9px;background:linear-gradient(135deg,#e3ebfe,#bccff9);border-radius:1px;"></div>
<svg style="position:absolute;left:573px;top:417px" width="5" height="7" viewBox="0 0 5 7"><path d="M1 0.8 L3.8 3.5 L1 6.2" stroke="#4d6185" stroke-width="1.7" fill="none"/></svg>
<div style="left:581px;top:415.5px;width:12.2px;height:10.5px;background:#ece9d8;"></div>
<div style="left:2px;top:430.5px;width:595px;height:13.2px;background-color:#5a5a5a;box-shadow:inset 0 1px 0 #3a3a3a, inset 0 -1px 0 #404040;background-image:repeating-linear-gradient(52deg, rgba(0,0,0,0) 0px, rgba(0,0,0,0) 3.2px, rgba(0,0,0,.5) 3.2px, rgba(0,0,0,.5) 4.3px, rgba(0,0,0,0) 4.3px, rgba(0,0,0,0) 5.6px),repeating-linear-gradient(45deg, rgba(0,0,0,0) 0px, rgba(0,0,0,0) 6px, rgba(0,0,0,.35) 6px, rgba(0,0,0,.35) 7.2px, rgba(255,255,255,0.03) 7.2px, rgba(255,255,255,.03) 9.7px);"></div>
<div class="t" style="left:10.70px;top:432.10px;font-size:10.4px;line-height:10.4px;color:#f0f0f0;font-weight:bold;letter-spacing:0.2px;">Audio</div>
<div style="left:589px;top:435.1px;width:0;height:0;border-left:3px solid transparent;border-right:3px solid transparent;border-bottom:3px solid #fff;"></div>
<div style="left:1.4px;top:445.2px;width:597.4px;height:101.00000000000006px;background:#fff;box-sizing:border-box;border-left:1.1px solid #b4b4ae;border-top:1.4px solid #a6adad;border-right:2.5px solid #a3a39c;border-bottom:2.2px solid #959590;"></div>
<div style="left:2.5px;top:446px;width:593.5px;height:15px;background:#ebeadb;"></div>
<div style="left:2.5px;top:458.5px;width:593.5px;height:1px;background:#e2decd;"></div>
<div style="left:2.5px;top:459.5px;width:593.5px;height:1px;background:#d6d2c2;"></div>
<div style="left:2.5px;top:460.5px;width:593.5px;height:1px;background:#cbc7b8;"></div>
<div style="left:33px;top:448px;width:1px;height:10px;background:#c7c5b2;"></div>
<div style="left:34px;top:448px;width:1px;height:10px;background:#fff;"></div>
<div style="left:471px;top:448px;width:1px;height:10px;background:#c7c5b2;"></div>
<div style="left:472px;top:448px;width:1px;height:10px;background:#fff;"></div>
<div style="left:542px;top:448px;width:1px;height:10px;background:#c7c5b2;"></div>
<div style="left:543px;top:448px;width:1px;height:10px;background:#fff;"></div>
<div class="t" style="left:9.60px;top:451.04px;font-size:10px;line-height:10px;color:#222;font-weight:normal;">No</div>
<div class="t" style="left:40.50px;top:451.04px;font-size:10px;line-height:10px;color:#222;font-weight:normal;">File</div>
<div class="t" style="left:237.70px;width:300px;text-align:right;top:451.04px;font-size:10px;line-height:10px;color:#222;font-weight:normal;">Time</div>
<div style="left:33px;top:461.5px;width:1px;height:81.5px;background:#efefe8;"></div>
<div style="left:473px;top:461.5px;width:1px;height:81.5px;background:#efefe8;"></div>
<div style="left:543px;top:461.5px;width:1px;height:81.5px;background:#efefe8;"></div>
<div style="left:2.5px;top:473.6px;width:593.5px;height:0.7px;background:#ececE4;"></div>
<div style="left:2.5px;top:486.8px;width:593.5px;height:0.7px;background:#ececE4;"></div>
<div style="left:2.5px;top:500.0px;width:593.5px;height:0.7px;background:#ececE4;"></div>
<div style="left:2.5px;top:513.2px;width:593.5px;height:0.7px;background:#ececE4;"></div>
<div style="left:2.5px;top:526.4px;width:593.5px;height:0.7px;background:#ececE4;"></div>
<div style="left:2.5px;top:539.6px;width:593.5px;height:0.7px;background:#ececE4;"></div>
<div style="left:2.5px;top:552.8px;width:593.5px;height:0.7px;background:#ececE4;"></div>
<div style="left:6px;top:461.5px;width:536.5px;height:12.2px;background:#ece9d8;"></div>
<div class="t" style="left:8.00px;top:463.84px;font-size:10px;line-height:10px;color:#1b1b1b;font-weight:normal;">1</div>
<div class="t" style="left:38.50px;top:463.84px;font-size:10px;line-height:10px;color:#1b1b1b;font-weight:normal;">C:\Audio\MELANIE C - NEVER BE THE SAME AGAIN.mp3</div>
<div class="t" style="left:237.70px;width:300px;text-align:right;top:463.84px;font-size:10px;line-height:10px;color:#1b1b1b;font-weight:normal;">00:04:52</div>
<div class="t" style="left:8.00px;top:477.04px;font-size:10px;line-height:10px;color:#1b1b1b;font-weight:normal;">2</div>
<div class="t" style="left:38.50px;top:477.04px;font-size:10px;line-height:10px;color:#1b1b1b;font-weight:normal;letter-spacing:-0.1px;">C:\Audio\BLOODHOUND GANG - FIRE WATHER BURN.mp3</div>
<div class="t" style="left:237.70px;width:300px;text-align:right;top:477.04px;font-size:10px;line-height:10px;color:#1b1b1b;font-weight:normal;">00:04:51</div>
<div style="left:0px;top:546px;width:776.5px;height:13px;background:#ece9d8;"></div>
<div class="t u" style="left:1.70px;top:551.39px;font-size:8.4px;line-height:8.4px;color:#222;font-weight:normal;">Information about this program</div>
<div style="left:0px;top:559.8px;width:780px;height:3.2px;background:linear-gradient(to bottom,#3a7ee6,#2a86f0);"></div>
<div style="left:0px;top:559.8px;width:70.4px;height:3.2px;background:linear-gradient(to bottom,#5aa85a,#3f9a3f);"></div>
<div style="left:597px;top:21px;width:2px;height:525px;background:linear-gradient(to right,#a7a59c,#d9d6c8);"></div>
<div style="left:599px;top:21px;width:1px;height:525px;background:#fdfdf8;"></div>
<div style="left:600px;top:21px;width:176.5px;height:525px;background:#ece9d8;"></div>
<div style="left:601px;top:24px;width:175.5px;height:13px;background-color:#5a5a5a;box-shadow:inset 0 1px 0 #3a3a3a, inset 0 -1px 0 #404040;background-image:repeating-linear-gradient(52deg, rgba(0,0,0,0) 0px, rgba(0,0,0,0) 3.2px, rgba(0,0,0,.5) 3.2px, rgba(0,0,0,.5) 4.3px, rgba(0,0,0,0) 4.3px, rgba(0,0,0,0) 5.6px),repeating-linear-gradient(45deg, rgba(0,0,0,0) 0px, rgba(0,0,0,0) 6px, rgba(0,0,0,.35) 6px, rgba(0,0,0,.35) 7.2px, rgba(255,255,255,0.03) 7.2px, rgba(255,255,255,.03) 9.7px);"></div>
<div class="t" style="left:610.00px;top:25.60px;font-size:10.4px;line-height:10.4px;color:#f0f0f0;font-weight:bold;letter-spacing:0.2px;">Preview</div>
<div style="left:768.5px;top:28.5px;width:0;height:0;border-left:3px solid transparent;border-right:3px solid transparent;border-bottom:3px solid #fff;"></div>
<div style="left:602px;top:38.5px;width:174.5px;height:121px;background:#ece9d8;border-left:1px solid #f8f8f2;"></div>
<div style="left:602px;top:39px;width:174px;height:105px;box-sizing:border-box;border:1px solid #fbfaf4;border-bottom:1px solid #c9c5b2;"></div>
<svg style="position:absolute;left:653px;top:40px" width="69" height="100.5" viewBox="0 0 69 100"><defs><filter id="bl" x="-10%" y="-10%" width="120%" height="120%"><feGaussianBlur stdDeviation="2.3"/></filter><filter id="bl2" x="-20%" y="-20%" width="140%" height="140%"><feGaussianBlur stdDeviation="0.6"/></filter><filter id="nz" x="0" y="0" width="100%" height="100%"><feTurbulence type="fractalNoise" baseFrequency="0.35" numOctaves="2" seed="3"/><feColorMatrix values="0 0 0 0 0  0 0 0 0 0  0 0 0 0 0  0 0 0 1.2 -0.45"/></filter><clipPath id="cp"><rect x="0" y="0" width="69" height="100"/></clipPath></defs><g clip-path="url(#cp)"><rect x="0" y="0" width="69" height="100" fill="#23443c"/><g filter="url(#bl)"><rect x="-0.5" y="-0.5" width="11" height="11" fill="#081510"/><rect x="9.5" y="-0.5" width="11" height="11" fill="#081510"/><rect x="19.5" y="-0.5" width="11" height="11" fill="#1a3528"/><rect x="29.5" y="-0.5" width="11" height="11" fill="#336e70"/><rect x="39.5" y="-0.5" width="11" height="11" fill="#1a3528"/><rect x="49.5" y="-0.5" width="11" height="11" fill="#1a3528"/><rect x="59.5" y="-0.5" width="11" height="11" fill="#081510"/><rect x="-0.5" y="9.5" width="11" height="11" fill="#081510"/><rect x="9.5" y="9.5" width="11" height="11" fill="#1a3528"/><rect x="19.5" y="9.5" width="11" height="11" fill="#336e70"/><rect x="29.5" y="9.5" width="11" height="11" fill="#78b6bc"/><rect x="39.5" y="9.5" width="11" height="11" fill="#336e70"/><rect x="49.5" y="9.5" width="11" height="11" fill="#1a3528"/><rect x="59.5" y="9.5" width="11" height="11" fill="#081510"/><rect x="-0.5" y="19.5" width="11" height="11" fill="#081510"/><rect x="9.5" y="19.5" width="11" height="11" fill="#1a3528"/><rect x="19.5" y="19.5" width="11" height="11" fill="#78b6bc"/><rect x="29.5" y="19.5" width="11" height="11" fill="#bfe2e4"/><rect x="39.5" y="19.5" width="11" height="11" fill="#78b6bc"/><rect x="49.5" y="19.5" width="11" height="11" fill="#336e70"/><rect x="59.5" y="19.5" width="11" height="11" fill="#1a3528"/><rect x="-0.5" y="29.5" width="11" height="11" fill="#1a3528"/><rect x="9.5" y="29.5" width="11" height="11" fill="#336e70"/><rect x="19.5" y="29.5" width="11" height="11" fill="#78b6bc"/><rect x="29.5" y="29.5" width="11" height="11" fill="#bfe2e4"/><rect x="39.5" y="29.5" width="11" height="11" fill="#78b6bc"/><rect x="49.5" y="29.5" width="11" height="11" fill="#1a3528"/><rect x="59.5" y="29.5" width="11" height="11" fill="#081510"/><rect x="-0.5" y="39.5" width="11" height="11" fill="#081510"/><rect x="9.5" y="39.5" width="11" height="11" fill="#1a3528"/><rect x="19.5" y="39.5" width="11" height="11" fill="#336e70"/><rect x="29.5" y="39.5" width="11" height="11" fill="#78b6bc"/><rect x="39.5" y="39.5" width="11" height="11" fill="#bfe2e4"/><rect x="49.5" y="39.5" width="11" height="11" fill="#1a3528"/><rect x="59.5" y="39.5" width="11" height="11" fill="#081510"/><rect x="-0.5" y="49.5" width="11" height="11" fill="#1a3528"/><rect x="9.5" y="49.5" width="11" height="11" fill="#336e70"/><rect x="19.5" y="49.5" width="11" height="11" fill="#36443a"/><rect x="29.5" y="49.5" width="11" height="11" fill="#36443a"/><rect x="39.5" y="49.5" width="11" height="11" fill="#78b6bc"/><rect x="49.5" y="49.5" width="11" height="11" fill="#1a3528"/><rect x="59.5" y="49.5" width="11" height="11" fill="#081510"/><rect x="-0.5" y="59.5" width="11" height="11" fill="#1a3528"/><rect x="9.5" y="59.5" width="11" height="11" fill="#336e70"/><rect x="19.5" y="59.5" width="11" height="11" fill="#36443a"/><rect x="29.5" y="59.5" width="11" height="11" fill="#36443a"/><rect x="39.5" y="59.5" width="11" height="11" fill="#bfe2e4"/><rect x="49.5" y="59.5" width="11" height="11" fill="#1a3528"/><rect x="59.5" y="59.5" width="11" height="11" fill="#081510"/><rect x="-0.5" y="69.5" width="11" height="11" fill="#081510"/><rect x="9.5" y="69.5" width="11" height="11" fill="#1a3528"/><rect x="19.5" y="69.5" width="11" height="11" fill="#336e70"/><rect x="29.5" y="69.5" width="11" height="11" fill="#36443a"/><rect x="39.5" y="69.5" width="11" height="11" fill="#78b6bc"/><rect x="49.5" y="69.5" width="11" height="11" fill="#1a3528"/><rect x="59.5" y="69.5" width="11" height="11" fill="#081510"/><rect x="-0.5" y="79.5" width="11" height="11" fill="#081510"/><rect x="9.5" y="79.5" width="11" height="11" fill="#78b6bc"/><rect x="19.5" y="79.5" width="11" height="11" fill="#336e70"/><rect x="29.5" y="79.5" width="11" height="11" fill="#78b6bc"/><rect x="39.5" y="79.5" width="11" height="11" fill="#78b6bc"/><rect x="49.5" y="79.5" width="11" height="11" fill="#1a3528"/><rect x="59.5" y="79.5" width="11" height="11" fill="#081510"/><rect x="-0.5" y="89.5" width="11" height="11" fill="#1a3528"/><rect x="9.5" y="89.5" width="11" height="11" fill="#78b6bc"/><rect x="19.5" y="89.5" width="11" height="11" fill="#bfe2e4"/><rect x="29.5" y="89.5" width="11" height="11" fill="#bfe2e4"/><rect x="39.5" y="89.5" width="11" height="11" fill="#78b6bc"/><rect x="49.5" y="89.5" width="11" height="11" fill="#1a3528"/><rect x="59.5" y="89.5" width="11" height="11" fill="#081510"/></g><g filter="url(#bl2)"><path d="M39 42 Q34 41 30 46 L22 55 Q15 62 5 68 L7 73 Q18 70 27 64 L36 57 Q42 51 41 46 Z" fill="#dcaa7e"/><path d="M22 60 Q26 66 20 72 L16 71 Q20 66 18 62 Z" fill="#c08a5c"/><circle cx="37" cy="44" r="3" fill="#c89a68"/><path d="M17 77 Q24 75 30 79 L35 86 L32 88 L26 83 Q20 80 17 79 Z" fill="#b98a62" opacity=".8"/><path d="M24 8 L27 36 M34 4 L35 28 M43 8 L41 32" stroke="#e0f4f4" stroke-width="1.2" opacity=".55"/></g><rect x="0" y="0" width="69" height="100" filter="url(#nz)" opacity=".3"/><path d="M57 27 L48 60" stroke="#b8c4c8" stroke-width="1.5"/><path d="M48 60 L46 77" stroke="#d0e8ec" stroke-width="2.2" opacity=".7"/><rect x="1" y="95" width="5" height="3" fill="#e8e8e8"/></g></svg>
<div style="left:602px;top:144px;width:174px;height:15px;background:#ece9d8;"></div>
<div style="left:614px;top:148px;width:115px;height:3px;box-sizing:border-box;border-top:1px solid #c9c5b2;border-bottom:1px solid #fbfaf4;background:#f2f0e6;"></div>
<svg style="position:absolute;left:609px;top:146px" width="6" height="10" viewBox="0 0 6 10"><path d="M0.5 0.5 H5.5 V6.5 L3 9.5 L0.5 6.5 Z" fill="#f4f4ee" stroke="#3a9a80" stroke-width="1"/></svg>
<div style="left:602px;top:158.5px;width:174.5px;height:1px;background:#cbc7b4;"></div>
<div style="left:602px;top:159.5px;width:174.5px;height:1px;background:#faf9f3;"></div>
<div style="left:601px;top:163.6px;width:175.5px;height:12.8px;background-color:#5a5a5a;box-shadow:inset 0 1px 0 #3a3a3a, inset 0 -1px 0 #404040;background-image:repeating-linear-gradient(52deg, rgba(0,0,0,0) 0px, rgba(0,0,0,0) 3.2px, rgba(0,0,0,.5) 3.2px, rgba(0,0,0,.5) 4.3px, rgba(0,0,0,0) 4.3px, rgba(0,0,0,0) 5.6px),repeating-linear-gradient(45deg, rgba(0,0,0,0) 0px, rgba(0,0,0,0) 6px, rgba(0,0,0,.35) 6px, rgba(0,0,0,.35) 7.2px, rgba(255,255,255,0.03) 7.2px, rgba(255,255,255,.03) 9.7px);"></div>
<div class="t" style="left:610.00px;top:165.20px;font-size:10.4px;line-height:10.4px;color:#f0f0f0;font-weight:bold;letter-spacing:0.2px;">Project properties</div>
<div style="left:768.5px;top:168.0px;width:0;height:0;border-left:3px solid transparent;border-right:3px solid transparent;border-bottom:3px solid #fff;"></div>
<div style="left:601px;top:194px;width:174.5px;height:81.5px;box-sizing:border-box;border:1px solid #a9aeac;border-top-color:#a0a6a6;background:linear-gradient(to bottom,#fcfcfe,#f4f3ee);"></div>
<div style="left:651.1px;top:180px;width:29.299999999999955px;height:14.5px;box-sizing:border-box;border:1px solid #a9aeac;border-bottom:none;border-radius:2px 2px 0 0;background:linear-gradient(to bottom,#fcfcfa,#ecebe4);"></div>
<div class="t u" style="left:654.40px;top:184.47px;font-size:8.3px;line-height:8.3px;color:#222;font-weight:normal;">Clock</div>
<div style="left:682.7px;top:180px;width:31.799999999999955px;height:14.5px;box-sizing:border-box;border:1px solid #a9aeac;border-bottom:none;border-radius:2px 2px 0 0;background:linear-gradient(to bottom,#fcfcfa,#ecebe4);"></div>
<div class="t u" style="left:686.30px;top:184.47px;font-size:8.3px;line-height:8.3px;color:#222;font-weight:normal;">Slide #</div>
<div style="left:716.8px;top:180px;width:28.800000000000068px;height:14.5px;box-sizing:border-box;border:1px solid #a9aeac;border-bottom:none;border-radius:2px 2px 0 0;background:linear-gradient(to bottom,#fcfcfa,#ecebe4);"></div>
<div class="t u" style="left:719.50px;top:184.47px;font-size:8.3px;line-height:8.3px;color:#222;font-weight:normal;">Info</div>
<div style="left:601px;top:178.5px;width:50px;height:16.5px;box-sizing:border-box;border:1px solid #a9aeac;border-bottom:none;border-radius:2px 2px 0 0;background:#fcfcfe;"></div>
<div style="left:601.5px;top:178.2px;width:49px;height:2px;background:#e8a040;border-radius:2px 2px 0 0;"></div>
<div class="t u" style="left:606.90px;top:182.97px;font-size:8.3px;line-height:8.3px;color:#222;font-weight:normal;">Slideshow</div>
<div style="left:610.4px;top:200px;width:9.5px;height:9.5px;box-sizing:border-box;border:1px solid #4f74a0;background:linear-gradient(135deg,#dedcd4,#fbfbf8);"></div>
<svg style="position:absolute;left:611.9px;top:201.5px" width="7" height="7" viewBox="0 0 7 7"><path d="M0.8 3.2 L2.7 5.5 L6.3 1.2" stroke="#21a121" stroke-width="1.6" fill="none"/></svg>
<div class="t u" style="left:621.80px;top:201.47px;font-size:8.3px;line-height:8.3px;color:#222;font-weight:normal;">Hide mouse</div>
<div style="left:610.4px;top:214.4px;width:9.5px;height:9.5px;box-sizing:border-box;border:1px solid #4f74a0;background:linear-gradient(135deg,#dedcd4,#fbfbf8);"></div>
<svg style="position:absolute;left:611.9px;top:215.9px" width="7" height="7" viewBox="0 0 7 7"><path d="M0.8 3.2 L2.7 5.5 L6.3 1.2" stroke="#21a121" stroke-width="1.6" fill="none"/></svg>
<div class="t u" style="left:621.80px;top:215.97px;font-size:8.3px;line-height:8.3px;color:#222;font-weight:normal;">Random Effects</div>
<div class="t u" style="left:659.60px;top:232.47px;font-size:8.3px;line-height:8.3px;color:#222;font-weight:normal;">Effect time</div>
<div style="left:707.4px;top:226.5px;width:49.200000000000045px;height:16.099999999999994px;box-sizing:border-box;border:1px solid #c4c1b0;background:#fff;"></div>
<div style="left:742.1px;top:227.3px;width:14px;height:14.499999999999995px;box-sizing:border-box;border:1.3px solid #b3b09e;border-left-color:#cfccbc;background:#e7e5d8;"></div>
<div style="left:746.4px;top:233.25px;width:0;height:0;border-left:3px solid transparent;border-right:3px solid transparent;border-top:3.2px solid #000;"></div>
<div class="t u" style="left:710.40px;top:231.52px;font-size:8.3px;line-height:8.3px;color:#111;font-weight:normal;">1.0</div>
<div class="t u" style="left:609.00px;top:244.97px;font-size:8.3px;line-height:8.3px;color:#222;font-weight:normal;">Adapter</div>
<div style="left:610.4px;top:254.6px;width:146.20000000000005px;height:15.700000000000017px;box-sizing:border-box;border:1px solid #c4c1b0;background:#fff;"></div>
<div style="left:742.1px;top:255.4px;width:14px;height:14.100000000000017px;box-sizing:border-box;border:1.3px solid #b3b09e;border-left-color:#cfccbc;background:#e7e5d8;"></div>
<div style="left:746.4px;top:261.15px;width:0;height:0;border-left:3px solid transparent;border-right:3px solid transparent;border-top:3.2px solid #000;"></div>
<div class="t u" style="left:613.40px;top:259.42px;font-size:8.3px;line-height:8.3px;color:#111;font-weight:normal;">RADEON 9200 SERIES</div>
<div style="left:601px;top:276.3px;width:175.5px;height:1px;background:#faf9f3;"></div>
<div style="left:601px;top:282.8px;width:175.5px;height:13.4px;background-color:#5a5a5a;box-shadow:inset 0 1px 0 #3a3a3a, inset 0 -1px 0 #404040;background-image:repeating-linear-gradient(52deg, rgba(0,0,0,0) 0px, rgba(0,0,0,0) 3.2px, rgba(0,0,0,.5) 3.2px, rgba(0,0,0,.5) 4.3px, rgba(0,0,0,0) 4.3px, rgba(0,0,0,0) 5.6px),repeating-linear-gradient(45deg, rgba(0,0,0,0) 0px, rgba(0,0,0,0) 6px, rgba(0,0,0,.35) 6px, rgba(0,0,0,.35) 7.2px, rgba(255,255,255,0.03) 7.2px, rgba(255,255,255,.03) 9.7px);"></div>
<div class="t" style="left:610.00px;top:284.40px;font-size:10.4px;line-height:10.4px;color:#f0f0f0;font-weight:bold;letter-spacing:0.2px;">Slide properties</div>
<div style="left:768.5px;top:288.0px;width:0;height:0;border-left:3px solid transparent;border-right:3px solid transparent;border-top:3px solid #fff;"></div>
<div style="left:601px;top:301px;width:175.5px;height:13px;background-color:#5a5a5a;box-shadow:inset 0 1px 0 #3a3a3a, inset 0 -1px 0 #404040;background-image:repeating-linear-gradient(52deg, rgba(0,0,0,0) 0px, rgba(0,0,0,0) 3.2px, rgba(0,0,0,.5) 3.2px, rgba(0,0,0,.5) 4.3px, rgba(0,0,0,0) 4.3px, rgba(0,0,0,0) 5.6px),repeating-linear-gradient(45deg, rgba(0,0,0,0) 0px, rgba(0,0,0,0) 6px, rgba(0,0,0,.35) 6px, rgba(0,0,0,.35) 7.2px, rgba(255,255,255,0.03) 7.2px, rgba(255,255,255,.03) 9.7px);"></div>
<div class="t" style="left:610.00px;top:302.60px;font-size:10.4px;line-height:10.4px;color:#f0f0f0;font-weight:bold;letter-spacing:0.2px;">Timing</div>
<div style="left:768.5px;top:305.5px;width:0;height:0;border-left:3px solid transparent;border-right:3px solid transparent;border-bottom:3px solid #fff;"></div>
<div class="t u" style="left:604.30px;top:323.07px;font-size:8.3px;line-height:8.3px;color:#222;font-weight:normal;">Music length</div>
<div class="t u" style="left:604.30px;top:337.17px;font-size:8.3px;line-height:8.3px;color:#222;font-weight:normal;">Total slides</div>
<div class="t u" style="left:604.30px;top:351.27px;font-size:8.3px;line-height:8.3px;color:#222;font-weight:normal;">Average slide delay</div>
<div class="t u" style="left:604.30px;top:365.37px;font-size:8.3px;line-height:8.3px;color:#222;font-weight:normal;">Slideshow length</div>
<div style="left:695.8px;top:319.0px;width:58.2px;height:13.8px;box-sizing:border-box;border:1px solid #d2cfbe;border-top:1.5px solid #c8c5b2;border-right-color:#fbfbf5;border-bottom-color:#fbfbf5;background:#eeecdf;"></div>
<div style="left:695.8px;top:333.4px;width:58.2px;height:13.8px;box-sizing:border-box;border:1px solid #d2cfbe;border-top:1.5px solid #c8c5b2;border-right-color:#fbfbf5;border-bottom-color:#fbfbf5;background:#eeecdf;"></div>
<div style="left:695.8px;top:347.8px;width:58.2px;height:13.8px;box-sizing:border-box;border:1px solid #d2cfbe;border-top:1.5px solid #c8c5b2;border-right-color:#fbfbf5;border-bottom-color:#fbfbf5;background:#eeecdf;"></div>
<div style="left:695.8px;top:362.2px;width:58.2px;height:13.8px;box-sizing:border-box;border:1px solid #d2cfbe;border-top:1.5px solid #c8c5b2;border-right-color:#fbfbf5;border-bottom-color:#fbfbf5;background:#eeecdf;"></div>
<div style="left:605px;top:382.2px;width:9.5px;height:9.5px;box-sizing:border-box;border:1px solid #4f74a0;background:linear-gradient(135deg,#dedcd4,#fbfbf8);"></div>
<svg style="position:absolute;left:606.5px;top:383.7px" width="7" height="7" viewBox="0 0 7 7"><path d="M0.8 3.2 L2.7 5.5 L6.3 1.2" stroke="#21a121" stroke-width="1.6" fill="none"/></svg>
<div class="t u" style="left:616.80px;top:382.47px;font-size:8.3px;line-height:8.3px;color:#222;font-weight:normal;">Sync by slides</div>
<div class="t u" style="left:616.80px;top:398.47px;font-size:8.3px;line-height:8.3px;color:#222;font-weight:normal;">Repeat slides, times</div>
<div style="left:712px;top:392.7px;width:42.39999999999998px;height:15.900000000000034px;box-sizing:border-box;border:1px solid #c4c1b0;background:#fff;"></div>
<div style="left:739.9px;top:393.5px;width:14px;height:14.300000000000034px;box-sizing:border-box;border:1.3px solid #b3b09e;border-left-color:#cfccbc;background:#e7e5d8;"></div>
<div style="left:744.1999999999999px;top:399.34999999999997px;width:0;height:0;border-left:3px solid transparent;border-right:3px solid transparent;border-top:3.2px solid #000;"></div>
<div class="t u" style="left:715.00px;top:397.62px;font-size:8.3px;line-height:8.3px;color:#111;font-weight:normal;">2</div>
<div style="left:605.3px;top:418.5px;width:9.5px;height:9.5px;box-sizing:border-box;border:1px solid #4f74a0;background:linear-gradient(135deg,#dedcd4,#fbfbf8);"></div>
<svg style="position:absolute;left:606.8px;top:420.0px" width="7" height="7" viewBox="0 0 7 7"><path d="M0.8 3.2 L2.7 5.5 L6.3 1.2" stroke="#21a121" stroke-width="1.6" fill="none"/></svg>
<div class="t u" style="left:616.70px;top:418.77px;font-size:8.3px;line-height:8.3px;color:#222;font-weight:normal;">Sync by audio tracks</div>
<div class="t u" style="left:614.60px;top:435.47px;font-size:8.3px;line-height:8.3px;color:#222;font-weight:normal;">Repeat tracks, times</div>
<div style="left:711.8px;top:430.4px;width:43.0px;height:16.30000000000001px;box-sizing:border-box;border:1px solid #c4c1b0;background:#fff;"></div>
<div style="left:740.3px;top:431.2px;width:14px;height:14.700000000000012px;box-sizing:border-box;border:1.3px solid #b3b09e;border-left-color:#cfccbc;background:#e7e5d8;"></div>
<div style="left:744.5999999999999px;top:437.24999999999994px;width:0;height:0;border-left:3px solid transparent;border-right:3px solid transparent;border-top:3.2px solid #000;"></div>
<div class="t u" style="left:714.80px;top:435.52px;font-size:8.3px;line-height:8.3px;color:#111;font-weight:normal;">1</div>
<div style="left:605.3px;top:454.6px;width:9.5px;height:9.5px;box-sizing:border-box;border:1px solid #7090b4;background:linear-gradient(135deg,#dcdcd7,#fff);"></div>
<div class="t u" style="left:616.70px;top:456.47px;font-size:8.3px;line-height:8.3px;color:#222;font-weight:normal;">Set length</div>
<div style="left:703.7px;top:451.3px;width:50.8px;height:14.4px;box-sizing:border-box;border:1px solid #c9c7ba;background:#fff;"></div>
<div class="t" style="left:704.20px;top:453.24px;font-size:10px;line-height:10px;color:#c9c8c0;font-weight:normal;">00:00:00</div>
<div style="left:605.3px;top:467px;width:9.5px;height:9.5px;box-sizing:border-box;border:1px solid #7090b4;background:linear-gradient(135deg,#dcdcd7,#fff);"></div>
<div class="t u" style="left:616.70px;top:468.37px;font-size:8.3px;line-height:8.3px;color:#222;font-weight:normal;">Loop slideshow</div>
<div style="left:601px;top:482.5px;width:175.5px;height:1px;background:#cdc9b6;"></div>
<div style="left:601px;top:483.5px;width:175.5px;height:1px;background:#faf9f3;"></div>
<div style="left:601px;top:488.3px;width:175.5px;height:13.3px;background-color:#5a5a5a;box-shadow:inset 0 1px 0 #3a3a3a, inset 0 -1px 0 #404040;background-image:repeating-linear-gradient(52deg, rgba(0,0,0,0) 0px, rgba(0,0,0,0) 3.2px, rgba(0,0,0,.5) 3.2px, rgba(0,0,0,.5) 4.3px, rgba(0,0,0,0) 4.3px, rgba(0,0,0,0) 5.6px),repeating-linear-gradient(45deg, rgba(0,0,0,0) 0px, rgba(0,0,0,0) 6px, rgba(0,0,0,.35) 6px, rgba(0,0,0,.35) 7.2px, rgba(255,255,255,0.03) 7.2px, rgba(255,255,255,.03) 9.7px);"></div>
<div class="t" style="left:610.00px;top:489.90px;font-size:10.4px;line-height:10.4px;color:#f0f0f0;font-weight:bold;letter-spacing:0.2px;">Slideshow size</div>
<div style="left:768.5px;top:492.95px;width:0;height:0;border-left:3px solid transparent;border-right:3px solid transparent;border-bottom:3px solid #fff;"></div>
<div class="t" style="left:606.40px;top:508.33px;font-size:10px;line-height:10px;color:#333;font-weight:normal;">Estimated size, Mb</div>
<div style="left:703.7px;top:506.5px;width:51px;height:11.5px;box-sizing:border-box;border:1px solid #d5d2c2;border-right-color:#f6f5ef;border-bottom-color:#f6f5ef;background:#ece9d8;"></div>
<div style="left:601px;top:523.8px;width:175.5px;height:1px;background:#cdc9b6;"></div>
<div style="left:601px;top:524.8px;width:175.5px;height:1px;background:#faf9f3;"></div>
<div style="left:599px;top:544.8px;width:177.5px;height:1.5px;background:#aeaca0;"></div>
</div></body></html>
